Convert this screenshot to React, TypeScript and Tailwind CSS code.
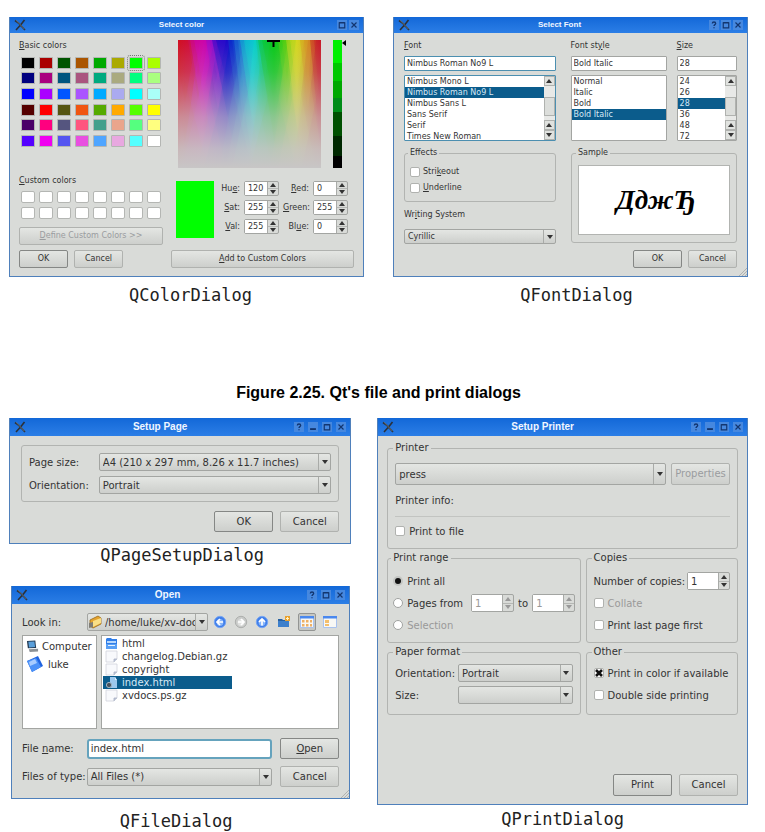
import type { ReactNode } from "react";

const bevel = "bg-gradient-to-b from-[#e4e6e3] to-[#cdcfcc]";
const frame = "border border-[#a3a5a2]";
const uiFont = "font-['DejaVu_Sans',sans-serif]";

function Caption({ children, className }: { children: ReactNode; className: string }) {
  return (
    <figcaption className={`text-center font-['DejaVu_Sans_Mono',monospace] text-[17px] leading-5 text-[#222] ${className}`}>
      {children}
    </figcaption>
  );
}

function WindowGlyph({ kind }: { kind: string }) {
  return (
    <svg viewBox="0 0 12 12" className="size-full" fill="none" stroke="#12356f" strokeWidth="1.4" aria-hidden="true">
      {kind === "Help" && <path d="M4 4.2c0-2.4 4-2.4 4 0 0 1.4-2 1.4-2 3M6 8.6v1.4" strokeWidth="1.6" />}
      {kind === "Minimize" && <path d="M2.5 8.5h7" strokeWidth="2.2" />}
      {kind === "Maximize" && <path d="M2.7 3.5h6.6v6H2.7zM2.7 3h6.6" />}
      {kind === "Close" && <path d="M3 3l6 6M9 3l-6 6" />}
    </svg>
  );
}

function TitleBar({ title, large, buttons }: { title: string; large?: boolean; buttons: string[] }) {
  return (
    <header
      className={`flex items-center bg-gradient-to-b from-[#1268d8] to-[#2b7ee6] px-1 ${large ? "h-[18px] text-[10px]" : "h-4 text-[8px]"}`}
    >
      <svg viewBox="0 0 12 12" className="size-3 shrink-0" fill="none" aria-hidden="true">
        <path d="M1 1.5l3.5 2.5L11 11M10.5 1L7 5.5 2 11" stroke="#2a3038" strokeWidth="1.6" />
        <path d="M2 1.2l8.5 9" stroke="#84898c" strokeWidth="0.7" />
      </svg>
      <h2 className="flex-1 text-center font-['Liberation_Sans',sans-serif] font-bold leading-3 text-[#f0f6ff]">{title}</h2>
      <div className={`flex ${large ? "gap-1" : "gap-0.5"}`}>
        {buttons.map((b) => (
          <button key={b} type="button" aria-label={b} className="size-[10px] bg-[#4688df]">
            <WindowGlyph kind={b} />
          </button>
        ))}
      </div>
    </header>
  );
}

function Push({ children, className, isDefault, disabled }: { children: ReactNode; className: string; isDefault?: boolean; disabled?: boolean }) {
  return (
    <button
      type="button"
      disabled={disabled}
      className={`rounded-[2px] border text-center leading-none ${bevel} ${isDefault ? "border-[#858785]" : "border-[#b0b2af]"} ${disabled ? "text-[#9a9c9f]" : ""} ${className}`}
    >
      {children}
    </button>
  );
}

function Arrow({ up }: { up?: boolean }) {
  return (
    <svg viewBox="0 0 6 4" className="h-[4px] w-[6px]" fill="currentColor" aria-hidden="true">
      <path d={up ? "M3 0L6 4H0z" : "M0 0h6L3 4z"} />
    </svg>
  );
}

function Combo({ id, value, className, icon }: { id: string; value: string; className: string; icon?: ReactNode }) {
  return (
    <div className={`flex min-w-0 items-stretch rounded-[2px] ${frame} ${bevel} ${className}`}>
      {icon}
      <select id={id} aria-label={id} className="min-w-0 flex-1 appearance-none bg-transparent pl-[3px] leading-[13px] outline-none">
        <option>{value}</option>
      </select>
      <span className="pointer-events-none flex w-3 items-center justify-center border-l border-[#a9aba8]">
        <Arrow />
      </span>
    </div>
  );
}

function Spin({ id, value, className, disabled }: { id: string; value: string; className: string; disabled?: boolean }) {
  return (
    <div className={`flex items-stretch rounded-[2px] ${frame} ${disabled ? "text-[#999]" : ""} ${className}`}>
      <input id={id} aria-label={id} defaultValue={value} disabled={disabled} className="w-0 min-w-0 flex-1 bg-white pl-[3px] leading-none outline-none" />
      <span className="flex w-[11px] flex-col border-l border-[#a9aba8]">
        <button type="button" aria-label={`Increase ${id}`} disabled={disabled} className="flex flex-1 items-center justify-center border-b border-[#b5b7b4]">
          <Arrow up />
        </button>
        <button type="button" aria-label={`Decrease ${id}`} disabled={disabled} className="flex flex-1 items-center justify-center">
          <Arrow />
        </button>
      </span>
    </div>
  );
}

function Check({ children, className, checked, disabled }: { children: ReactNode; className: string; checked?: boolean; disabled?: boolean }) {
  return (
    <label className={`flex items-center whitespace-nowrap ${disabled ? "text-[#999]" : ""} ${className}`}>
      <span className="grid size-[10px] shrink-0">
        <input
          type="checkbox"
          defaultChecked={checked}
          disabled={disabled}
          className="peer col-start-1 row-start-1 size-[10px] appearance-none rounded-[2px] border border-[#b0b2af] bg-white"
        />
        <svg viewBox="0 0 10 10" className="pointer-events-none col-start-1 row-start-1 hidden size-[10px] peer-checked:block" stroke="#111" strokeWidth="2.6" aria-hidden="true">
          <path d="M2 2l6 6M8 2L2 8" />
        </svg>
      </span>
      <span>{children}</span>
    </label>
  );
}

function Radio({ children, className, checked, disabled }: { children: ReactNode; className: string; checked?: boolean; disabled?: boolean }) {
  return (
    <label className={`flex items-center gap-1 whitespace-nowrap ${disabled ? "text-[#999]" : ""} ${className}`}>
      <input
        type="radio"
        name="range"
        defaultChecked={checked}
        disabled={disabled}
        className="size-[10px] shrink-0 appearance-none rounded-full border border-[#a0a2a0] bg-white checked:border-2 checked:border-[#c4c6c3] checked:bg-[#111]"
      />
      {children}
    </label>
  );
}

function Group({ title, children, className }: { title: string; children: ReactNode; className: string }) {
  return (
    <fieldset className={`min-w-0 rounded-[3px] border border-[#b2b4b1] ${className}`}>
      <legend className="-ml-0.5 px-0.5 leading-3">{title}</legend>
      {children}
    </fieldset>
  );
}

function Grip() {
  return (
    <svg viewBox="0 0 8 8" className="absolute right-0 bottom-0 size-2" stroke="#b0b2b0" aria-hidden="true">
      <path d="M0 8L8 0M3 8l5-5M6 8l2-2" />
    </svg>
  );
}

const shell = `relative border border-t-0 border-[#4f80bb] bg-[#d9dbd8] text-[#333] ${uiFont}`;

/* ---------- Colour dialog ---------- */

const basic = [
  "bg-[#000000]", "bg-[#aa0000]", "bg-[#005500]", "bg-[#aa5500]", "bg-[#00aa00]", "bg-[#aaaa00]", "bg-[#00ff00]", "bg-[#aaff00]",
  "bg-[#00007f]", "bg-[#aa007f]", "bg-[#00557f]", "bg-[#aa557f]", "bg-[#00aa7f]", "bg-[#aaaa7f]", "bg-[#00ff7f]", "bg-[#aaff7f]",
  "bg-[#0000ff]", "bg-[#aa00ff]", "bg-[#0055ff]", "bg-[#aa55ff]", "bg-[#00aaff]", "bg-[#aaaaf0]", "bg-[#00ffff]", "bg-[#aafff8]",
  "bg-[#550000]", "bg-[#ff0000]", "bg-[#555511]", "bg-[#f05511]", "bg-[#55aa00]", "bg-[#ffaa00]", "bg-[#55ff00]", "bg-[#ffff00]",
  "bg-[#4a0068]", "bg-[#ff007f]", "bg-[#55557f]", "bg-[#ff557f]", "bg-[#44a08c]", "bg-[#eaa58c]", "bg-[#55ff7f]", "bg-[#ffff7f]",
  "bg-[#5500ff]", "bg-[#f000f0]", "bg-[#5555f0]", "bg-[#e84fe0]", "bg-[#4fa5ff]", "bg-[#e8a8e0]", "bg-[#55ffff]", "bg-[#ffffff]",
];

const wedges = [
  ["#d01020", -8, 22, 104], ["#c81068", 10, 30, 60], ["#d000b8", 12, 40, 84], ["#8a10d0", 28, 52, 70],
  ["#0808c8", 34, 66, 76], ["#1048d0", 50, 68, 64], ["#2088d8", 56, 76, 90], ["#08d0d0", 62, 86, 80],
  ["#10c878", 78, 92, 58], ["#08c818", 80, 110, 92], ["#60d010", 100, 118, 66], ["#d8d820", 108, 130, 86],
  ["#d89020", 122, 138, 70], ["#c81828", 132, 152, 100],
] as const;

function Spectrum() {
  const hues = ["#d41020", "#cc08b8", "#0808c8", "#08d0d0", "#08c818", "#cfd81c", "#c81828"];
  const stops = [0, 0.17, 0.34, 0.52, 0.67, 0.83, 1];
  return (
    <svg viewBox="0 0 143 128" preserveAspectRatio="none" className="h-32 min-w-0 flex-1" role="img" aria-label="Hue and saturation">
      <defs>
        <linearGradient id="hue">
          {hues.map((c, i) => (
            <stop key={c} offset={stops[i]} stopColor={c} />
          ))}
        </linearGradient>
        <linearGradient id="fade" x1="0" y1="0" x2="0" y2="1">
          <stop offset="0" stopColor="#c8c6c6" stopOpacity="0" />
          <stop offset="0.25" stopColor="#c8c6c6" stopOpacity="0.2" />
          <stop offset="0.6" stopColor="#c8c6c6" stopOpacity="0.68" />
          <stop offset="0.85" stopColor="#c8c6c6" stopOpacity="0.92" />
          <stop offset="1" stopColor="#c8c6c6" stopOpacity="1" />
        </linearGradient>
      </defs>
      <rect width="143" height="128" fill="url(#hue)" />
      {wedges.map(([c, a, b, d]) => (
        <g key={c + a} fill={c}>
          <path d={`M${a} 0H${b}L${(a + b) / 2} ${d}z`} opacity="0.4" />
          <path d={`M${a + 4} 0H${b - 4}L${(a + b) / 2} ${d * 0.6}z`} opacity="0.4" />
          <path d={`M${a - 8} 128L${(a + b) / 2} ${d * 0.4}L${b + 8} 128z`} opacity="0.22" />
        </g>
      ))}
      <rect width="143" height="128" fill="url(#fade)" />
      <path d="M89 1h13M95.500 0v7" stroke="#000" strokeWidth="2" />
    </svg>
  );
}

function ColorDialog() {
  const rows = [
    ["hue", "120", "red", "0"],
    ["sat", "255", "green", "255"],
    ["val", "255", "blue", "0"],
  ];
  const names: Record<string, ReactNode> = {
    hue: <>Hu<u>e</u>:</>,
    sat: <><u>S</u>at:</>,
    val: <><u>V</u>al:</>,
    red: <><u>R</u>ed:</>,
    green: <><u>G</u>reen:</>,
    blue: <>Bl<u>u</u>e:</>,
  };
  return (
    <section className={`${shell} text-[8px]`}>
      <TitleBar title="Select color" buttons={["Maximize", "Close"]} />
      <div className="px-[9px] pb-2">
        <div className="flex gap-[13px]">
          <div className="w-[144px] shrink-0 pt-[5px]">
            <h3 className="leading-4"><u>B</u>asic colors</h3>
            <div className="mt-px grid h-[94px] grid-cols-8 grid-rows-6 place-items-center">
              {basic.map((c, i) => (
                <button
                  key={c}
                  type="button"
                  aria-label={`Basic color ${i + 1}`}
                  className={`h-3 w-[14px] rounded-[1px] border border-[#b4b6b3] ${c} ${i === 6 ? "outline outline-dotted outline-[#777] outline-offset-1" : ""}`}
                />
              ))}
            </div>
            <h3 className="mt-6 leading-4"><u>C</u>ustom colors</h3>
            <div className="grid h-8 grid-cols-8 grid-rows-2 place-items-center">
              {Array.from({ length: 16 }, (_, i) => (
                <button key={i} type="button" aria-label={`Custom color ${i + 1}`} className="h-3 w-[14px] rounded-[2px] border border-[#b4b6b3] bg-white" />
              ))}
            </div>
            <Push disabled className="mt-1.5 h-[18px] w-full"><u>D</u>efine Custom Colors &gt;&gt;</Push>
          </div>
          <div className="min-w-0 flex-1 pt-[7px]">
            <div className="flex pl-0.5">
              <Spectrum />
              <div className="ml-3 h-32 w-[9px] bg-[linear-gradient(#00f000_18%,#00c800_18%_32%,#00a800_32%_45%,#008c18_45%_56%,#005000_56%_75%,#002800_75%_91%,#000_91%)]" />
              <svg viewBox="0 0 4 6" className="mr-2 h-[6px] w-1" aria-hidden="true"><path d="M4 0v6L0 3z" /></svg>
            </div>
            <div className="mt-[13px] flex">
              <div className="h-[57px] w-[38px] bg-[#00ff00]" />
              <div className="grid grid-cols-[26px_35px_26px_35px] content-start gap-x-1 gap-y-1">
                {rows.map(([a, av, b, bv]) => (
                  <div key={a} className="contents">
                    <label htmlFor={a} className="text-right leading-[15px]">{names[a]}</label>
                    <Spin id={a} value={av} className="h-[15px]" />
                    <label htmlFor={b} className="text-right leading-[15px]">{names[b]}</label>
                    <Spin id={b} value={bv} className="h-[15px]" />
                  </div>
                ))}
              </div>
            </div>
          </div>
        </div>
        <div className="mt-[5px] flex">
          <Push isDefault className="h-[18px] w-[49px]">OK</Push>
          <Push className="ml-1.5 h-[18px] w-[49px]">Cancel</Push>
          <Push className="ml-12 h-[18px] flex-1"><u>A</u>dd to Custom Colors</Push>
        </div>
      </div>
    </section>
  );
}

/* ---------- Font dialog ---------- */

function ScrollBar() {
  const cap = "flex h-[10px] items-center justify-center border border-[#b0b2af] bg-[#e0e2df]";
  return (
    <div className="flex w-[11px] shrink-0 flex-col bg-[#e8e9e7]" aria-hidden="true">
      <span className={cap}><Arrow up /></span>
      <span className="mt-[11px] flex-1 border border-[#b0b2af] bg-[#dcdedb]" />
      <span className={`mt-1 ${cap}`}><Arrow up /></span>
      <span className={cap}><Arrow /></span>
    </div>
  );
}

function List({ items, selected, active, scroll, label }: { items: string[]; selected: number; active?: boolean; scroll?: boolean; label: string }) {
  return (
    <div className={`mt-1 flex h-[66px] overflow-hidden rounded-[1px] border bg-white ${active ? "border-[#4c8fb0]" : "border-[#a3a5a2]"}`}>
      <ul role="listbox" aria-label={label} className="min-w-0 flex-1">
        {items.map((t, i) => (
          <li key={t} role="option" aria-selected={i === selected} className={`h-[11px] pl-0.5 leading-[11px] whitespace-nowrap ${i === selected ? "bg-[#0b5c8c] text-[#d5e8f5]" : ""}`}>
            {t}
          </li>
        ))}
      </ul>
      {scroll && <ScrollBar />}
    </div>
  );
}

function FontDialog() {
  const box = "h-[15px] w-full rounded-[1px] border bg-white pl-0.5 leading-none outline-none";
  return (
    <section className={`${shell} text-[8px]`}>
      <TitleBar title="Select Font" buttons={["Help", "Maximize", "Close"]} />
      <div className="px-[10px] pt-[5px] pb-2">
        <div className="grid grid-cols-[158fr_97fr_61fr] gap-x-[10px]">
          <div className="mr-[5px]">
            <label htmlFor="font" className="block leading-4"><u>F</u>ont</label>
            <input id="font" defaultValue="Nimbus Roman No9 L" className={`mt-0.5 border-[#4c8fb0] ${box}`} />
            <List label="Fonts" active scroll selected={1} items={["Nimbus Mono L", "Nimbus Roman No9 L", "Nimbus Sans L", "Sans Serif", "Serif", "Times New Roman"]} />
          </div>
          <div>
            <label htmlFor="style" className="block leading-4">Font st<u>y</u>le</label>
            <input id="style" defaultValue="Bold Italic" className={`mt-0.5 border-[#a3a5a2] ${box}`} />
            <List label="Font styles" selected={3} items={["Normal", "Italic", "Bold", "Bold Italic"]} />
          </div>
          <div>
            <label htmlFor="size" className="block leading-4"><u>S</u>ize</label>
            <input id="size" defaultValue="28" className={`mt-0.5 border-[#a3a5a2] ${box}`} />
            <List label="Sizes" scroll selected={2} items={["24", "26", "28", "36", "48", "72"]} />
          </div>
        </div>
        <div className="mt-1.5 grid grid-cols-[153fr_167fr] gap-x-[15px]">
          <div>
            <Group title="Effects" className="h-[55px] pl-[5px]">
              <Check className="mt-[5px] h-4 gap-[3px]">Stri<u>k</u>eout</Check>
              <Check className="h-4 gap-[3px]"><u>U</u>nderline</Check>
            </Group>
            <label htmlFor="writing" className="mt-[5px] block leading-4">Wr<u>i</u>ting System</label>
            <Combo id="writing" value="Cyrillic" className="mt-1.5 h-[15px]" />
          </div>
          <Group title="Sample" className="h-24 px-1.5">
            <div className="mt-[6px] flex h-[70px] items-center justify-center border border-[#b2b4b1] bg-white pl-1 font-['Liberation_Serif',serif] text-[27px] font-bold text-black italic">
              ДджЂ
            </div>
          </Group>
        </div>
        <div className="mt-1.5 flex justify-end gap-1.5">
          <Push isDefault className="h-[18px] w-[49px]">OK</Push>
          <Push className="h-[18px] w-[49px]">Cancel</Push>
        </div>
      </div>
      <Grip />
    </section>
  );
}

/* ---------- Page setup dialog ---------- */

function PageSetupDialog() {
  return (
    <section className={`${shell} text-[10px]`}>
      <TitleBar large title="Setup Page" buttons={["Help", "Minimize", "Maximize", "Close"]} />
      <div className="px-[11px] pt-[9px] pb-[11px]">
        <div className="grid grid-cols-[auto_1fr] items-center gap-x-[10px] gap-y-[5px] rounded-[3px] border border-[#b2b4b1] px-[7px] py-[7px]">
          <label htmlFor="paper">Page size:</label>
          <Combo id="paper" value="A4 (210 x 297 mm, 8.26 x 11.7 inches)" className="h-[18px]" />
          <label htmlFor="orient">Orientation:</label>
          <Combo id="orient" value="Portrait" className="h-[18px]" />
        </div>
        <div className="mt-[9px] flex justify-end gap-[7px]">
          <Push isDefault className="h-[21px] w-[59px]">OK</Push>
          <Push className="h-[21px] w-[59px]">Cancel</Push>
        </div>
      </div>
    </section>
  );
}

/* ---------- File dialog ---------- */

function ArrowDisc({ dir, off }: { dir: string; off?: boolean }) {
  return (
    <svg viewBox="0 0 14 14" className="size-[14px]" fill="none" aria-hidden="true">
      <circle cx="7" cy="7" r="5.7" fill={off ? "#c9cbc9" : "#3f7eea"} stroke={off ? "#adafad" : "#76a5f2"} />
      <circle cx="7" cy="7.500" r="3.400" fill={off ? "#dfe0df" : "#85b4fa"} />
      <path
        d={dir === "left" ? "M10 7H4.500M7 4L4 7l3 3" : dir === "right" ? "M4 7h5.500M7 4l3 3-3 3" : "M7 10.500V4.500M4 7l3-3 3 3"}
        stroke="#fff"
        strokeWidth="1.700"
      />
    </svg>
  );
}

function FileIcon({ kind }: { kind: string }) {
  return (
    <svg viewBox="0 0 13 13" className="size-[13px] shrink-0" aria-hidden="true">
      {kind === "folder" && (
        <>
          <path d="M1 2l1-1h4l1 1h5v10H1z" fill="#2f7de8" />
          <path d="M2 4h9v2H2z" fill="#b8d8fc" />
          <path d="M1 7h11v5H1z" fill="#5aa0f5" />
          <path d="M3 8h7v1H3z" fill="#e8f3ff" />
        </>
      )}
      {kind === "file" && (
        <>
          <path d="M1 1h11v8l-3 3H1z" fill="#f8f9fc" stroke="#d0d3dc" strokeWidth="0.8" />
          <path d="M12 9H9v3" fill="#bcc4d8" stroke="#a9b1c4" strokeWidth="0.8" />
        </>
      )}
      {kind === "html" && (
        <>
          <path d="M5 1h5l2 3v8H5z" fill="#9dc8ed" />
          <path d="M10 1v3h2" fill="#e0f0fc" />
          <circle cx="4" cy="9" r="2.600" fill="#48525c" stroke="#9fb4c5" />
        </>
      )}
    </svg>
  );
}

function ViewIcon({ list }: { list?: boolean }) {
  return (
    <svg viewBox="0 0 14 14" className="size-[14px]" aria-hidden="true">
      <path d="M0.500 1.500h13v11H0.500z" fill="#f8f8f5" stroke="#a9c2ee" />
      <path d="M0 1h14v2.500H0z" fill="#4a88ee" />
      {list ? (
        <path d="M2 5h4v3H2zM2 9h4v2H2z" fill="#f3bf6c" />
      ) : (
        <path d="M2 5h2.500v2.500H2zM6 5h2.500v2.500H6zM10 5h2v2.500h-2zM2 9h2.500v2.500H2zM6 9h2.500v2.500H6zM10 9h2v2.500h-2z" fill="#eeb064" />
      )}
    </svg>
  );
}

function FileDialog() {
  const files = [
    ["folder", "html"],
    ["file", "changelog.Debian.gz"],
    ["file", "copyright"],
    ["html", "index.html"],
    ["file", "xvdocs.ps.gz"],
  ];
  return (
    <section className={`ml-0.5 mr-px ${shell} text-[10px]`}>
      <TitleBar large title="Open" buttons={["Help", "Maximize", "Close"]} />
      <div className="px-[10px] pt-[9px] pb-[11px]">
        <div className="flex items-center">
          <label htmlFor="lookin" className="w-[65px] shrink-0">Look in:</label>
          <Combo
            id="lookin"
            value="/home/luke/xv-docs"
            className="h-[18px] w-[121px]"
            icon={
              <svg viewBox="0 0 14 14" className="size-[14px] shrink-0 self-center" aria-hidden="true">
                <path d="M2 5l8-4 3 2v6l-8 4-3-2z" fill="#e3a32f" stroke="#9b6a18" strokeWidth="0.8" />
                <path d="M5 6l8-3v5l-8 4z" fill="#fadf86" />
                <path d="M1 8l4-1v5l-4 1z" fill="#807e76" />
              </svg>
            }
          />
          <div className="flex flex-1 items-center justify-between pr-0.5 pl-[5px]">
            <button type="button" aria-label="Back"><ArrowDisc dir="left" /></button>
            <button type="button" aria-label="Forward" disabled><ArrowDisc dir="right" off /></button>
            <button type="button" aria-label="Parent directory"><ArrowDisc dir="up" /></button>
            <button type="button" aria-label="Create new folder">
              <svg viewBox="0 0 14 14" className="size-[14px]" aria-hidden="true">
                <path d="M1 4h4l1 1h6v7H1z" fill="#27609f" />
                <path d="M1 6h11v6H1z" fill="#3d80cc" />
                <path d="M8 1h5v5H8z" fill="#e9a02c" />
                <path d="M10.500 2v3M9 3.500h3" stroke="#fff2c8" />
              </svg>
            </button>
            <button type="button" aria-label="List view" className="rounded-[2px] border border-[#939593] bg-[#c5c7c4] p-px"><ViewIcon /></button>
            <button type="button" aria-label="Detail view"><ViewIcon list /></button>
          </div>
        </div>
        <div className="mt-1 flex h-[94px]">
          <ul className={`w-[75px] bg-white pt-[3px] pl-[3px] ${frame}`}>
            <li className="flex h-[15px] items-center gap-[3px]">
              <svg viewBox="0 0 14 14" className="size-[13px] shrink-0" aria-hidden="true">
                <path d="M1 1l9-0.500 1 8-9 0.500z" fill="#243a52" />
                <path d="M2.500 2l6.500-0.500 0.800 6-6.500 0.500z" fill="#5a9fda" />
                <path d="M3 10l10-0.500v3L4 13z" fill="#8c9196" />
              </svg>
              Computer
            </li>
            <li className="mt-px flex h-[18px] items-center gap-1">
              <svg viewBox="0 0 18 18" className="size-[18px] shrink-0" aria-hidden="true">
                <path d="M1 6l11-5 5 10-11 6z" fill="#1f63e0" />
                <path d="M1 6l9-3 5 9-9 5z" fill="#4c92f8" />
                <path d="M3 7l6-3 2 4-7 3z" fill="#a8ccff" />
              </svg>
              luke
            </li>
          </ul>
          <div className="w-[4px]" />
          <ul role="listbox" aria-label="Files" className={`flex-1 bg-white p-px ${frame}`}>
            {files.map(([kind, name]) => (
              <li
                key={name}
                role="option"
                aria-selected={kind === "html"}
                className={`flex h-[13px] w-[129px] items-center gap-1 pl-0.5 leading-[13px] whitespace-nowrap ${kind === "html" ? "bg-[#0b5c8c] text-[#d5e8f5]" : ""}`}
              >
                <FileIcon kind={kind} />
                {name}
              </li>
            ))}
          </ul>
        </div>
        <div className="mt-[9px] grid grid-cols-[auto_1fr_67px] items-center gap-y-[7px]">
          <label htmlFor="fname">File <u>n</u>ame:</label>
          <input id="fname" defaultValue="index.html" className="h-5 min-w-0 rounded-[3px] border-2 border-[#65a3bd] bg-white pl-0.5 outline-none" />
          <Push isDefault className="h-[21px] w-[59px] justify-self-end"><u>O</u>pen</Push>
          <label htmlFor="ftype" className="pr-px">Files of type:</label>
          <Combo id="ftype" value="All Files (*)" className="h-[18px]" />
          <Push className="h-[21px] w-[59px] justify-self-end">Cancel</Push>
        </div>
      </div>
      <Grip />
    </section>
  );
}

/* ---------- Print dialog ---------- */

function PrintDialog() {
  return (
    <section className={`${shell} text-[10px]`}>
      <TitleBar large title="Setup Printer" buttons={["Help", "Minimize", "Maximize", "Close"]} />
      <div className="px-[9px] pt-1.5 pb-2">
        <Group title="Printer" className="h-[107px] px-[7px]">
          <div className="mt-[9px] flex gap-[5px]">
            <Combo id="printer" value="press" className="h-[22px] flex-1" />
            <Push disabled className="h-[22px] w-[59px]">Properties</Push>
          </div>
          <p className="mt-2 leading-4">Printer info:</p>
          <hr className="mt-[7px] border-[#c2c4c1]" />
          <Check className="mt-1.5 h-4 gap-1">Print to file</Check>
        </Group>
        <div className="mt-[3px] grid grid-cols-[194fr_153fr] gap-x-[5px] gap-y-[3px]">
          <Group title="Print range" className="h-[91px] pl-[5px]">
            <Radio checked className="mt-1.5 h-[22px]">Print all</Radio>
            <div className="flex h-[22px] items-center">
              <Radio className="">Pages from</Radio>
              <Spin id="from" value="1" disabled className="ml-2 h-[18px] w-[43px]" />
              <span className="mx-1">to</span>
              <Spin id="to" value="1" disabled className="h-[18px] w-[43px]" />
            </div>
            <Radio disabled className="h-[22px]">Selection</Radio>
          </Group>
          <Group title="Copies" className="h-[91px] px-[7px]">
            <div className="mt-1.5 flex h-[22px] items-center justify-between">
              <label htmlFor="copies" className="whitespace-nowrap">Number of copies:</label>
              <Spin id="copies" value="1" className="h-[18px] w-[43px]" />
            </div>
            <Check disabled className="h-[22px] gap-1">Collate</Check>
            <Check className="h-[22px] gap-1">Print last page first</Check>
          </Group>
          <Group title="Paper format" className="h-[69px] px-[7px]">
            <div className="mt-1.5 grid grid-cols-[auto_1fr] items-center gap-x-[3px] gap-y-1">
              <label htmlFor="porient">Orientation:</label>
              <Combo id="porient" value="Portrait" className="h-[18px]" />
              <label htmlFor="psize">Size:</label>
              <Combo id="psize" value="" className="h-[18px]" />
            </div>
          </Group>
          <Group title="Other" className="h-[69px] pl-[7px]">
            <Check checked className="mt-1 h-[22px] gap-1">Print in color if available</Check>
            <Check className="h-[22px] gap-1">Double side printing</Check>
          </Group>
        </div>
        <div className="mt-[59px] flex justify-end gap-[7px]">
          <Push isDefault className="h-[22px] w-[59px]">Print</Push>
          <Push className="h-[22px] w-[59px]">Cancel</Push>
        </div>
      </div>
    </section>
  );
}

export default function App() {
  return (
    <main className="bg-white pt-[17px] pr-[17px] pl-[9px]">
      <div className="grid grid-cols-2 gap-[29px]">
        <figure>
          <ColorDialog />
          <Caption className="mt-2 pl-2">QColorDialog</Caption>
        </figure>
        <figure>
          <FontDialog />
          <Caption className="mt-2 pl-3">QFontDialog</Caption>
        </figure>
      </div>
      <h1 className="mt-[76px] text-center font-['Liberation_Sans',sans-serif] text-base leading-6 font-bold text-black">
        Figure 2.25. Qt's file and print dialogs
      </h1>
      <div className="mt-[13px] grid grid-cols-[12fr_13fr] gap-[26px]">
        <div>
          <figure>
            <PageSetupDialog />
            <Caption className="mt-px pl-1">QPageSetupDialog</Caption>
          </figure>
          <figure className="mt-[21px]">
            <FileDialog />
            <Caption className="mt-3 pr-2">QFileDialog</Caption>
          </figure>
        </div>
        <figure>
          <PrintDialog />
          <Caption className="mt-1">QPrintDialog</Caption>
        </figure>
      </div>
    </main>
  );
}
